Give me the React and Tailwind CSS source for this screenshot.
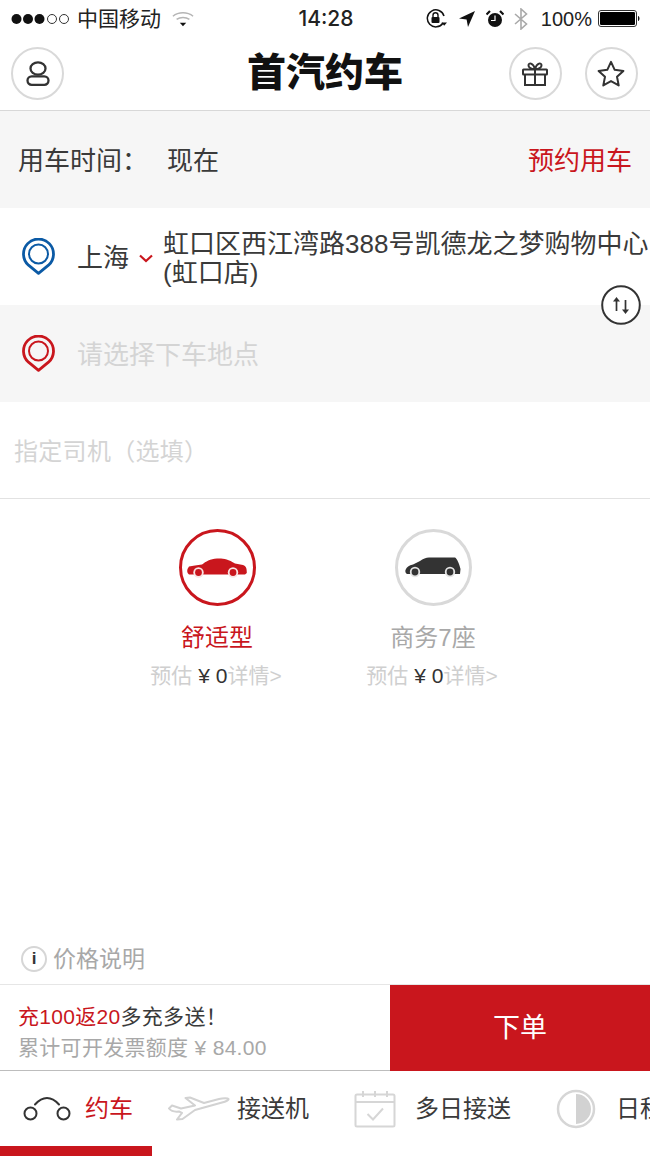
import React from 'react';

const RED = '#c9161d';

const SignalDots = () => (
  <svg width="59" height="14" viewBox="0 0 59 14">
    {[5.500, 17, 28.500].map((x) => <circle key={x} cx={x} cy="7" r="5" fill="#111" />)}
    {[41, 53].map((x) => <circle key={x} cx={x} cy="7" r="4.500" fill="none" stroke="#333" strokeWidth="1" />)}
  </svg>
);

const Wifi = () => (
  <svg width="22" height="16" viewBox="0 0 24 17" fill="none" stroke="#b5b5b5" strokeWidth="1.600">
    <path d="M1 5.500C7 0.500 17 0.500 23 5.500" />
    <path d="M5 9C9 6 15 6 19 9" />
    <path d="M8.500 12.500L15.500 12.500L12 16.500Z" fill="#111" stroke="none" />
  </svg>
);

const RotationLock = () => (
  <svg width="22" height="20" viewBox="0 0 22 20" fill="none" stroke="#111">
    <path d="M17 14A8.500 8.500 0 1 1 18 7" strokeWidth="1.500" />
    <path d="M15.500 13.500L21 13.500L18.200 16.800Z" fill="#111" stroke="none" />
    <rect x="5.500" y="8" width="8" height="6" rx="1" fill="#111" stroke="none" />
    <path d="M7 8V6.300A2.500 2.500 0 0 1 12 6.300V8" strokeWidth="1.400" />
  </svg>
);

const LocationArrow = () => (
  <svg width="16" height="16" viewBox="0 0 16 16">
    <path d="M16 0L0 7.600L7.600 8.400L9 16Z" fill="#111" />
  </svg>
);

const Alarm = () => (
  <svg width="18" height="18" viewBox="0 0 18 18">
    <circle cx="9" cy="10" r="7" fill="#111" />
    <path d="M9 5.500V10.500H5" fill="none" stroke="#fff" strokeWidth="1.200" />
    <path d="M0.500 4.500L4 1M17.500 4.500L14 1" stroke="#111" strokeWidth="2.200" />
  </svg>
);

const Bluetooth = () => (
  <svg width="14" height="22" viewBox="0 0 14 22" fill="none" stroke="#a9a9a9" strokeWidth="1.600">
    <path d="M1 6L12.500 16L7 21V1L12.500 6L1 16" />
  </svg>
);

const Battery = () => (
  <svg width="43" height="18" viewBox="0 0 43 18">
    <rect x="0.500" y="0.500" width="38" height="16" rx="2.500" fill="#fff" stroke="#333" />
    <rect x="2" y="2" width="35" height="13" rx="1.200" fill="#000" />
    <path d="M40 6C42 6.400 42 10.600 40 11Z" fill="#111" />
  </svg>
);

const PersonIcon = () => (
  <svg width="24" height="25" viewBox="0 0 24 25" fill="none" stroke="#333" strokeWidth="2.300">
    <ellipse cx="12" cy="7.500" rx="7.500" ry="6.200" />
    <rect x="1.500" y="15.300" width="21" height="8.500" rx="4.200" />
  </svg>
);

const GiftIcon = () => (
  <svg width="26" height="24" viewBox="0 0 26 24" fill="none" stroke="#333" strokeWidth="2">
    <rect x="1" y="7.500" width="24" height="5" rx="0.500" />
    <path d="M3 12.500V23H23V12.500M13 7.500V23" />
    <path d="M13 7C10 7 6.500 6 6.500 3.200C6.500 0.500 11 0.500 13 7C15 0.500 19.500 0.500 19.500 3.200C19.500 6 16 7 13 7Z" />
  </svg>
);

const StarIcon = () => (
  <svg width="28" height="27" viewBox="0 0 28 27" fill="none" stroke="#333" strokeWidth="2" strokeLinejoin="round">
    <path d="M14 1.800L17.700 9.800L26.400 10.900L20 16.800L21.700 25.400L14 21.100L6.300 25.400L8 16.800L1.600 10.900L10.300 9.800Z" />
  </svg>
);

const Pin = ({ color }) => (
  <svg className="shrink-0" width="33" height="37" viewBox="0 0 33 37" fill="none" stroke={color}>
    <path d="M16.500 35.300L6.500 27.200A15 15 0 1 1 26.500 27.200Z" strokeWidth="2.800" strokeLinejoin="round" />
    <circle cx="16.500" cy="16" r="9.500" strokeWidth="2" />
  </svg>
);

const SwapIcon = () => (
  <svg width="40" height="40" viewBox="0 0 40 40" fill="none" stroke="#333">
    <circle cx="20" cy="20" r="18.800" fill="#fff" strokeWidth="2" />
    <path d="M15.500 26V14" strokeWidth="1.700" />
    <path d="M12 16.500L15.500 12L19 16.500Z" fill="#333" stroke="none" />
    <path d="M24.500 15V27" strokeWidth="1.700" />
    <path d="M21 24.500L24.500 29L28 24.500Z" fill="#333" stroke="none" />
  </svg>
);

const Sedan = () => (
  <svg width="60" height="20" viewBox="0 0 60 20">
    <path d="M0.500 11L2 8.500L8 7.500L15 6.500C19 3.500 23 1 30 0.500C36 0.200 41 1 48 5.500L56 7C59 8 59.800 10 59.800 15L58 16.500H2C0 15 0 13 0.500 11Z" fill={RED} />
    <circle cx="11.500" cy="14.500" r="5.200" fill="#f8e4e4" />
    <circle cx="11.500" cy="14.500" r="3.400" fill={RED} />
    <circle cx="46" cy="14.500" r="5.200" fill="#f8e4e4" />
    <circle cx="46" cy="14.500" r="3.400" fill={RED} />
  </svg>
);

const Mpv = () => (
  <svg width="56" height="21" viewBox="0 0 56 21">
    <path d="M0.500 13C1.500 10 4 8.500 8 7.500L15 4C18 2 21 0.500 24 0.500H50C52 1.500 54 6 55.500 12L55 17H2C0.500 16 0 14.500 0.500 13Z" fill="#333" />
    <circle cx="10" cy="15" r="5.200" fill="#e4e4e4" />
    <circle cx="10" cy="15" r="3.400" fill="#333" />
    <circle cx="45" cy="15" r="5.200" fill="#e4e4e4" />
    <circle cx="45" cy="15" r="3.400" fill="#333" />
  </svg>
);

const CarTabIcon = () => (
  <svg width="48" height="24" viewBox="0 0 48 24" fill="none" stroke="#333" strokeWidth="2">
    <circle cx="7.500" cy="16.500" r="6" />
    <circle cx="40.500" cy="16.500" r="6" />
    <path d="M12 7.500C16 3 20 1 24 1C28 1 32 3 36 7.500" strokeLinecap="round" />
  </svg>
);

const PlaneIcon = () => (
  <svg width="62" height="26" viewBox="0 0 62 26" fill="none" stroke="#d2d2d2" strokeWidth="2" strokeLinejoin="round">
    <path d="M1 12.500C3 15 7 16 11 15.500L14 16.800L9 23.500L14.500 23L27 14L54 6.500C58 5.500 61 4 60.500 3C60 2 55 2 51 3L36 7L22 1.500L17.500 2L27 9.500L13 12.500L4 9.500L1 12.500Z" />
  </svg>
);

const CalendarIcon = () => (
  <svg width="42" height="38" viewBox="0 0 42 38" fill="none" stroke="#d6d6d6" strokeWidth="2">
    <rect x="1.500" y="4.500" width="39" height="32" rx="1.500" />
    <path d="M1.500 12H40.500" />
    <path d="M9 1V7M21 1V7M33 1V7" />
    <path d="M13.500 24L19 29.500L29 18.500" />
  </svg>
);

const HalfCircleIcon = () => (
  <svg width="40" height="40" viewBox="0 0 40 40" fill="none">
    <circle cx="20" cy="20" r="18" stroke="#d6d6d6" strokeWidth="2.500" />
    <path d="M20 5A15 15 0 0 1 20 35Z" fill="#d2d2d2" />
  </svg>
);

const CircleButton = ({ children }) => (
  <div className="w-[53px] h-[53px] rounded-full border-[2px] border-[#d9d9d9] flex items-center justify-center">
    {children}
  </div>
);

const CarOption = ({ icon, active, name, ring }) => (
  <div className="w-[216px] flex flex-col items-center">
    <div className={`w-[77px] h-[77px] rounded-full flex items-center justify-center ${ring}`}>{icon}</div>
    <div className={`mt-[16px] text-[24px] leading-[32px] ${active ? 'text-[#c9161d]' : 'text-[#a8a8a8]'}`}>{name}</div>
    <div className="mt-[7px] -ml-[2px] text-[21px] leading-[30px] text-[#cfcfcf] whitespace-nowrap">
      预估 <span className="text-[#333]">¥ 0</span>详情&gt;
    </div>
  </div>
);

export default function App() {
  return (
    <div className="w-[650px] h-[1156px] overflow-hidden bg-white flex flex-col text-[#3a3a3a] font-['Liberation_Sans','Noto_Sans_CJK_SC',sans-serif]">
      {/* Status bar */}
      <div className="h-[37px] shrink-0 flex items-center justify-between pl-[11px] pr-[9px] text-[21px] text-[#222]">
        <div className="w-[240px] flex items-center">
          <SignalDots />
          <span className="ml-[7px]">中国移动</span>
          <span className="ml-[11px]"><Wifi /></span>
        </div>
        <div className="font-['Inter'] font-medium text-[21px]">14:28</div>
        <div className="w-[240px] flex items-center justify-end text-[20px]">
          <RotationLock />
          <span className="ml-[11px]"><LocationArrow /></span>
          <span className="ml-[11px]"><Alarm /></span>
          <span className="ml-[10px]"><Bluetooth /></span>
          <span className="ml-[13px]">100%</span>
          <span className="ml-[6px]"><Battery /></span>
        </div>
      </div>

      {/* Header */}
      <div className="h-[74px] shrink-0 flex items-center justify-between pl-[11px] pr-[12px] border-b border-[#d8d8d8]">
        <CircleButton><PersonIcon /></CircleButton>
        <div className="ml-[77px] mb-[3px] text-[39px] leading-none font-black text-[#111]">首汽约车</div>
        <div className="flex gap-[23px]">
          <CircleButton><GiftIcon /></CircleButton>
          <CircleButton><StarIcon /></CircleButton>
        </div>
      </div>

      {/* Ride time */}
      <div className="h-[97px] shrink-0 bg-[#f6f6f6] flex items-center justify-between px-[18px] pt-[4px] text-[26px]">
        <div className="flex items-center">
          <span className="w-[149px]">用车时间：</span>
          <span>现在</span>
        </div>
        <span className="text-[#c9161d]">预约用车</span>
      </div>

      {/* Pickup */}
      <div className="relative h-[97px] shrink-0 flex items-center pl-[22px]">
        <Pin color="#0b5aa5" />
        <span className="ml-[22px] mt-[3px] shrink-0 text-[26px] whitespace-nowrap">上海</span>
        <svg className="ml-[10px] mt-[3px] shrink-0" width="14" height="9" viewBox="0 0 14 9" fill="none" stroke="#c9161d" strokeWidth="2.200">
          <path d="M1 1.500L7 7L13 1.500" />
        </svg>
        <div className="ml-[10px] mt-[4px] w-[490px] shrink-0 text-[26px] leading-[29px] whitespace-nowrap">
          虹口区西江湾路388号凯德龙之梦购物中心
          <br />
          (虹口店)
        </div>
        <div className="absolute right-[9px] top-[77px] z-10"><SwapIcon /></div>
      </div>

      {/* Dropoff */}
      <div className="h-[97px] shrink-0 bg-[#f6f6f6] flex items-center pl-[22px]">
        <Pin color="#c9161d" />
        <span className="ml-[22px] mt-[4px] text-[26px] text-[#d4d4d4]">请选择下车地点</span>
      </div>

      {/* Driver */}
      <div className="h-[97px] shrink-0 flex items-center pl-[14px] pt-[4px] border-b border-[#e2e2e2] text-[24px] tracking-[0.3px] text-[#d4d4d4]">
        指定司机（选填）
      </div>

      {/* Car types */}
      <div className="shrink-0 flex justify-center pt-[30px]">
        <CarOption icon={<Sedan />} active name="舒适型" ring="border-[3px] border-[#c9161d]" />
        <CarOption icon={<Mpv />} name="商务7座" ring="border-[3px] border-[#d9d9d9]" />
      </div>

      <div className="flex-1" />

      {/* Price note */}
      <div className="h-[51px] shrink-0 flex items-center pl-[21px] border-b border-[#e6e6e6] text-[23px] text-[#a8a8a8]">
        <div className="w-[26px] h-[26px] rounded-full border-[2px] border-[#d6d6d6] flex items-center justify-center text-[17px] font-bold text-[#333]">i</div>
        <span className="ml-[6px]">价格说明</span>
      </div>

      {/* Order bar */}
      <div className="h-[86px] shrink-0 flex">
        <div className="w-[390px] border-b border-[#bdbdbd] pl-[18px] pt-[16px] text-[21px] leading-[31px] tracking-[0.3px]">
          <div><span className="text-[#c9161d]">充100返20</span>多充多送！</div>
          <div className="text-[#a8a8a8]">累计可开发票额度 ¥ 84.00</div>
        </div>
        <div className="flex-1 bg-[#c9161d] flex items-center justify-center text-[27px] text-white">下单</div>
      </div>

      {/* Tabs */}
      <div className="h-[75px] shrink-0 flex items-center overflow-hidden text-[24px] whitespace-nowrap">
        <div className="w-[152px] shrink-0 pl-[23px] flex items-center">
          <CarTabIcon />
          <span className="ml-[14px] text-[#c9161d]">约车</span>
        </div>
        <div className="w-[186px] shrink-0 pl-[16px] flex items-center">
          <PlaneIcon />
          <span className="ml-[7px]">接送机</span>
        </div>
        <div className="w-[202px] shrink-0 pl-[16px] flex items-center">
          <CalendarIcon />
          <span className="ml-[19px]">多日接送</span>
        </div>
        <div className="shrink-0 pl-[16px] flex items-center">
          <HalfCircleIcon />
          <span className="ml-[20px]">日租</span>
        </div>
      </div>
      <div className="h-[10px] w-[152px] shrink-0 bg-[#c9161d]" />
    </div>
  );
}
